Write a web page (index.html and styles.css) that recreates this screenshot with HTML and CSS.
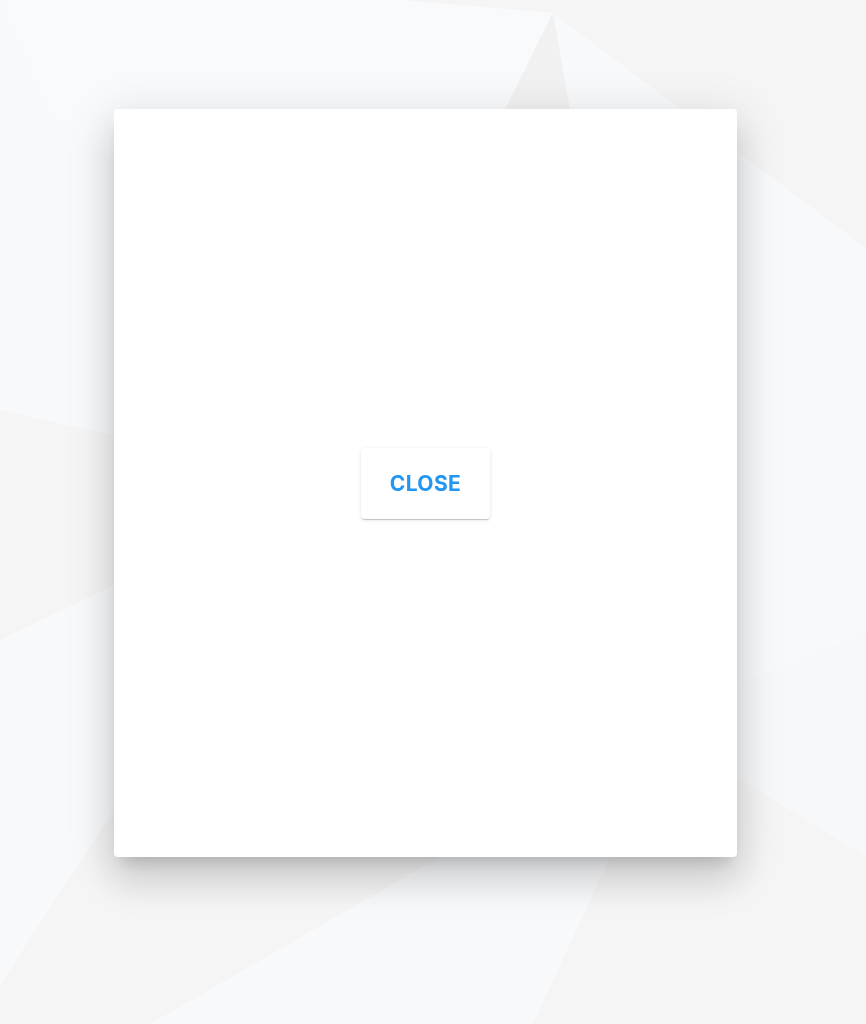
FILE: index.html
```html
<!DOCTYPE html>
<html lang="en">
<head>
<meta charset="utf-8">
<title>Dialog</title>
<link rel="stylesheet" href="styles.css">
</head>
<body>
<svg class="backdrop" viewBox="0 0 866 1024" preserveAspectRatio="none" aria-hidden="true">
  <rect width="866" height="1024" fill="#f5f5f5"/>
  <polygon points="0,0 400,0 553,13 450,220 114,435 0,410" fill="#f9fafb"/>
  <polygon points="0,0 48,112 114,160 114,435 0,410" fill="#f8f9fa"/>
  <polygon points="553,13 490,140 578,140" fill="#f1f1f1"/>
  <polygon points="553,13 866,248 866,633 700,700 600,300 570,109" fill="#f8f9fb"/>
  <polygon points="866,633 866,857 737,777 700,700" fill="#f7f8fa"/>
  <polygon points="0,640 114,585 140,700 114,810 0,985" fill="#f8f9fb"/>
  <polygon points="150,1024 440,857 610,857 533,1024" fill="#f8f9fb"/>
</svg>
<main class="page">
  <section class="dialog" role="dialog">
    <button class="close-btn" type="button">CLOSE</button>
  </section>
</main>
</body>
</html>
```

FILE: styles.css
```css
html, body {
  margin: 0;
  padding: 0;
}
body {
  font-family: Inter, "Noto Sans", "Liberation Sans", sans-serif;
  background: #f5f5f5;
  min-height: 1024px;
  position: relative;
}
.backdrop {
  position: fixed;
  inset: 0;
  width: 100%;
  height: 100%;
  z-index: 0;
  display: block;
}
.page {
  position: relative;
  z-index: 1;
  box-sizing: border-box;
  min-height: 1024px;
  padding: 109px 0 0 114px;
}
.dialog {
  width: 623px;
  height: 748px;
  background: #ffffff;
  border-radius: 4px;
  box-shadow: 0px 11px 15px -7px rgba(0,0,0,0.16),
              0px 24px 38px 3px rgba(0,0,0,0.11),
              0px 9px 46px 8px rgba(0,0,0,0.09);
  display: flex;
  align-items: center;
  justify-content: center;
}
.close-btn {
  width: 129px;
  height: 71px;
  padding: 0;
  border: none;
  background: #ffffff;
  border-radius: 4px;
  box-shadow: 0px 2px 1px -1px rgba(0,0,0,0.12),
              0px 1px 1px 0px rgba(0,0,0,0.09),
              0px 1px 4px 0px rgba(0,0,0,0.10);
  color: #2196f3;
  font-family: Inter, "Noto Sans", "Liberation Sans", sans-serif;
  font-size: 21px;
  font-weight: 700;
  letter-spacing: 0.4px;
  cursor: pointer;
}
```
